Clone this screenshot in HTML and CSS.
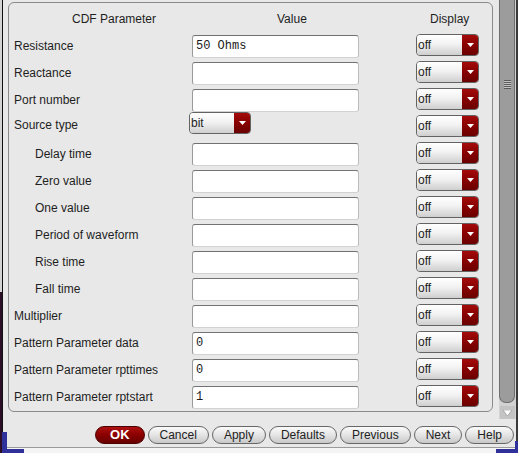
FILE: index.html
```html
<!DOCTYPE html>
<html>
<head>
<meta charset="utf-8">
<link rel="stylesheet" href="styles.css">
</head>
<body>
<div class="window">
  <div class="main">
    <div class="content">
      <div class="frame">
        <div class="grid">
          <div class="hdr hdr-param">CDF Parameter</div>
          <div class="hdr hdr-value">Value</div>
          <div class="hdr hdr-display">Display</div>

          <div class="label">Resistance</div>
          <div class="cell"><div class="field">50 Ohms</div></div>
          <div class="cell"><div class="select"><span class="select-text">off</span><span class="select-arrow"><svg width="7" height="4" viewBox="0 0 7 4"><polygon points="0,0 7,0 3.5,4" fill="#fff"/></svg></span></div></div>

          <div class="label">Reactance</div>
          <div class="cell"><div class="field"></div></div>
          <div class="cell"><div class="select"><span class="select-text">off</span><span class="select-arrow"><svg width="7" height="4" viewBox="0 0 7 4"><polygon points="0,0 7,0 3.5,4" fill="#fff"/></svg></span></div></div>

          <div class="label">Port number</div>
          <div class="cell"><div class="field"></div></div>
          <div class="cell"><div class="select"><span class="select-text">off</span><span class="select-arrow"><svg width="7" height="4" viewBox="0 0 7 4"><polygon points="0,0 7,0 3.5,4" fill="#fff"/></svg></span></div></div>

          <div class="label label-raised">Source type</div>
          <div class="cell"><div class="select select-value"><span class="select-text">bit</span><span class="select-arrow"><svg width="7" height="4" viewBox="0 0 7 4"><polygon points="0,0 7,0 3.5,4" fill="#fff"/></svg></span></div></div>
          <div class="cell"><div class="select"><span class="select-text">off</span><span class="select-arrow"><svg width="7" height="4" viewBox="0 0 7 4"><polygon points="0,0 7,0 3.5,4" fill="#fff"/></svg></span></div></div>

          <div class="label indent">Delay time</div>
          <div class="cell"><div class="field"></div></div>
          <div class="cell"><div class="select"><span class="select-text">off</span><span class="select-arrow"><svg width="7" height="4" viewBox="0 0 7 4"><polygon points="0,0 7,0 3.5,4" fill="#fff"/></svg></span></div></div>

          <div class="label indent">Zero value</div>
          <div class="cell"><div class="field"></div></div>
          <div class="cell"><div class="select"><span class="select-text">off</span><span class="select-arrow"><svg width="7" height="4" viewBox="0 0 7 4"><polygon points="0,0 7,0 3.5,4" fill="#fff"/></svg></span></div></div>

          <div class="label indent">One value</div>
          <div class="cell"><div class="field"></div></div>
          <div class="cell"><div class="select"><span class="select-text">off</span><span class="select-arrow"><svg width="7" height="4" viewBox="0 0 7 4"><polygon points="0,0 7,0 3.5,4" fill="#fff"/></svg></span></div></div>

          <div class="label indent">Period of waveform</div>
          <div class="cell"><div class="field"></div></div>
          <div class="cell"><div class="select"><span class="select-text">off</span><span class="select-arrow"><svg width="7" height="4" viewBox="0 0 7 4"><polygon points="0,0 7,0 3.5,4" fill="#fff"/></svg></span></div></div>

          <div class="label indent">Rise time</div>
          <div class="cell"><div class="field"></div></div>
          <div class="cell"><div class="select"><span class="select-text">off</span><span class="select-arrow"><svg width="7" height="4" viewBox="0 0 7 4"><polygon points="0,0 7,0 3.5,4" fill="#fff"/></svg></span></div></div>

          <div class="label indent">Fall time</div>
          <div class="cell"><div class="field"></div></div>
          <div class="cell"><div class="select"><span class="select-text">off</span><span class="select-arrow"><svg width="7" height="4" viewBox="0 0 7 4"><polygon points="0,0 7,0 3.5,4" fill="#fff"/></svg></span></div></div>

          <div class="label">Multiplier</div>
          <div class="cell"><div class="field"></div></div>
          <div class="cell"><div class="select"><span class="select-text">off</span><span class="select-arrow"><svg width="7" height="4" viewBox="0 0 7 4"><polygon points="0,0 7,0 3.5,4" fill="#fff"/></svg></span></div></div>

          <div class="label">Pattern Parameter data</div>
          <div class="cell"><div class="field">0</div></div>
          <div class="cell"><div class="select"><span class="select-text">off</span><span class="select-arrow"><svg width="7" height="4" viewBox="0 0 7 4"><polygon points="0,0 7,0 3.5,4" fill="#fff"/></svg></span></div></div>

          <div class="label">Pattern Parameter rpttimes</div>
          <div class="cell"><div class="field">0</div></div>
          <div class="cell"><div class="select"><span class="select-text">off</span><span class="select-arrow"><svg width="7" height="4" viewBox="0 0 7 4"><polygon points="0,0 7,0 3.5,4" fill="#fff"/></svg></span></div></div>

          <div class="label">Pattern Parameter rptstart</div>
          <div class="cell"><div class="field">1</div></div>
          <div class="cell"><div class="select"><span class="select-text">off</span><span class="select-arrow"><svg width="7" height="4" viewBox="0 0 7 4"><polygon points="0,0 7,0 3.5,4" fill="#fff"/></svg></span></div></div>
        </div>
      </div>
    </div>
    <div class="scrollbar">
      <div class="thumb"><div class="grip"></div></div>
      <div class="arrow-btn"><svg width="9" height="6" viewBox="0 0 9 6"><polygon points="0,0 9,0 4.5,6" fill="#fff" stroke="#8a8a8a" stroke-width="0.6"/></svg></div>
    </div>
  </div>
  <div class="buttons">
    <span class="btn btn-ok">OK</span>
    <span class="btn">Cancel</span>
    <span class="btn">Apply</span>
    <span class="btn">Defaults</span>
    <span class="btn">Previous</span>
    <span class="btn">Next</span>
    <span class="btn">Help</span>
  </div>
  <div class="bottom"></div>
  <div class="corner corner-bl"></div>
  <div class="corner corner-br"></div>
</div>
</body>
</html>
```

FILE: styles.css
```css
html, body {
  margin: 0;
  padding: 0;
}
body {
  width: 518px;
  height: 453px;
  overflow: hidden;
  background: linear-gradient(#d4d4d4 0 292px, #2b0e26 292px);
  font-family: "Liberation Sans", Arial, sans-serif;
  font-size: 12px;
  color: #1e1e1e;
}
.window {
  position: relative;
  margin-left: 2px;
  width: 516px;
  height: 453px;
  box-sizing: border-box;
  border-left: 1px solid #101010;
  border-right: 2px solid #3a3a3a;
  background: #e8e8e8;
  display: flex;
  flex-direction: column;
}
.main {
  display: flex;
  height: 419px;
}
.content {
  flex: 1;
  padding: 2px 0 0 5px;
}
.frame {
  width: 485px;
  height: 410px;
  box-sizing: border-box;
  border: 1px solid #8a8a8a;
  border-radius: 6px;
}
.grid {
  display: grid;
  grid-template-columns: 175px 227px 63px;
  grid-template-rows: 28px repeat(14, 27px);
  padding-left: 5px;
}
.hdr {
  line-height: 28px;
  padding-top: 2px;
  white-space: nowrap;
}
.hdr-param { padding-left: 58px; }
.hdr-value { padding-left: 88px; }
.hdr-display { padding-left: 14px; }
.label {
  line-height: 27px;
  padding-top: 2px;
  white-space: nowrap;
}
.label.indent { padding-left: 21px; }
.label.label-raised { padding-top: 0; }
.field {
  margin: 4px 0 0 3px;
  width: 167px;
  height: 23px;
  box-sizing: border-box;
  background: #fff;
  border: 1px solid;
  border-color: #727272 #bcbcbc #d2d2d2 #9a9a9a;
  border-radius: 3px;
  font-family: "Liberation Mono", "Courier New", monospace;
  font-size: 12px;
  line-height: 21px;
  padding-left: 3px;
  color: #1a1a1a;
}
.select {
  display: flex;
  width: 63px;
  height: 22px;
  margin-top: 3px;
  box-sizing: border-box;
  border: 1px solid #636363;
  border-radius: 4px;
  overflow: hidden;
}
.select-value {
  width: 62px;
  margin-top: 0;
}
.select-text {
  flex: 1;
  padding: 1px 0 0 1px;
  line-height: 19px;
  background: linear-gradient(#ffffff, #f2f2f2 45%, #cfcfcf);
}
.select-arrow {
  width: 16px;
  display: flex;
  align-items: center;
  justify-content: center;
  background: linear-gradient(#a40b0b, #870000 50%, #6a0000);
}
.select-arrow svg { display: block; }
.scrollbar {
  width: 17px;
  display: flex;
  flex-direction: column;
  background: #d2d2d2;
}
.thumb {
  width: 16px;
  height: 403px;
  box-sizing: border-box;
  border: 1px solid #6e6e6e;
  border-top: none;
  border-radius: 0 0 7px 7px;
  background: #9c9c9c;
  padding-top: 80px;
}
.grip {
  width: 7px;
  height: 9px;
  margin-left: 4px;
  background: repeating-linear-gradient(#5a5a5a 0 1px, #c4c4c4 1px 2px);
}
.arrow-btn {
  width: 15px;
  height: 13px;
  margin: 3px 0 0 1px;
  background: #c4c4c4;
  display: flex;
  align-items: center;
  justify-content: center;
}
.arrow-btn svg { display: block; }
.buttons {
  height: 28px;
  box-sizing: border-box;
  display: flex;
  justify-content: flex-end;
  align-items: flex-start;
  gap: 3px;
  padding: 7px 2px 0 0;
}
.btn {
  height: 18px;
  box-sizing: border-box;
  border: 1px solid #676767;
  border-radius: 9px;
  padding: 0 11px;
  line-height: 16px;
  background: linear-gradient(#fbfbfb, #e4e4e4 50%, #c8c8c8);
  color: #222;
  white-space: nowrap;
}
.btn-ok {
  padding: 0 14px;
  background: linear-gradient(#ad1010, #8a0000 50%, #680000);
  border-color: #4a0000;
  color: #fff;
  font-weight: bold;
  font-size: 13px;
}
.bottom {
  flex: 1;
  border-top: 1px solid #9a9a9a;
  background: #f4f4f4;
}
.corner {
  position: absolute;
  bottom: 0;
  width: 22px;
  height: 21px;
  box-sizing: border-box;
  border-bottom: 4px solid #2f309a;
}
.corner-bl {
  left: -1px;
  border-left: 5px solid #2f309a;
}
.corner-br {
  right: -2px;
  border-right: 3px solid #2f309a;
  height: 12px;
}
```
